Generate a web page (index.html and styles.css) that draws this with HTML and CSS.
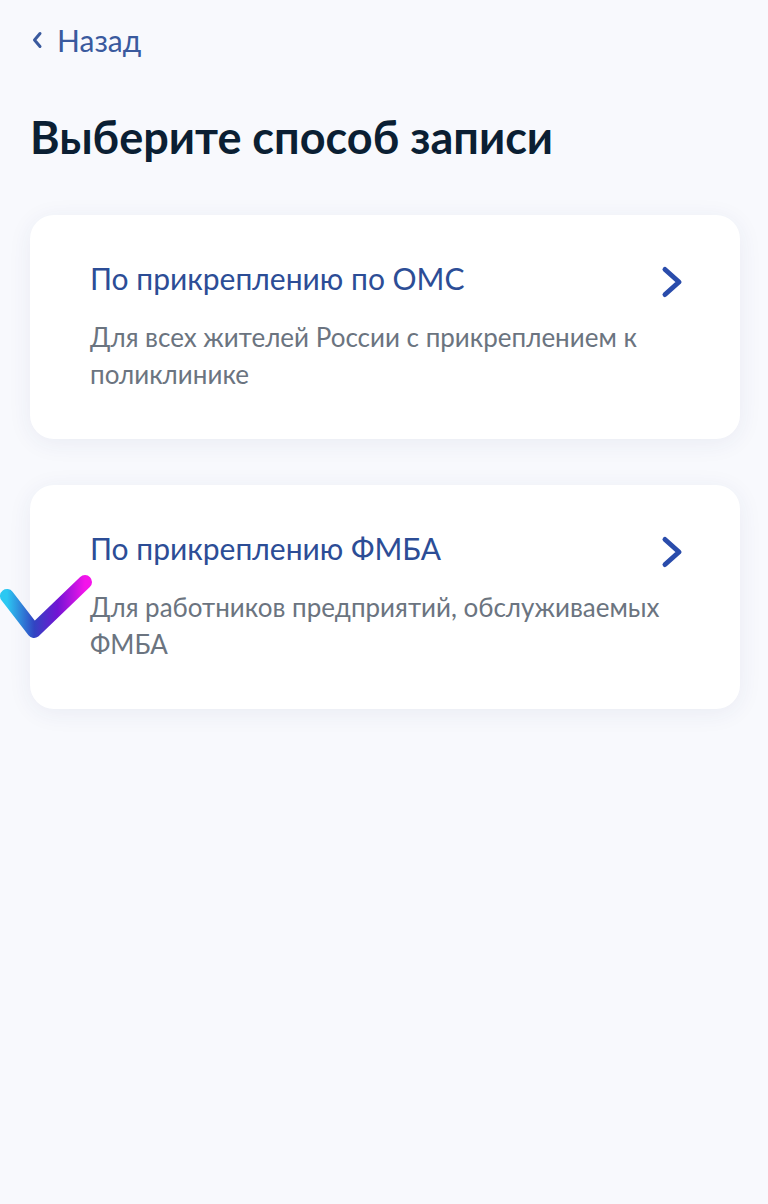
FILE: index.html
```html
<!DOCTYPE html>
<html lang="ru">
<head>
    <meta charset="UTF-8">
    <meta name="viewport" content="width=device-width, initial-scale=1.0">
    <title>Выберите способ записи</title>
    <link rel="stylesheet" href="styles.css">
</head>
<body>
    <div class="page">
        <a class="back-link" href="#">
            <svg class="back-icon" width="14" height="22" viewBox="0 0 14 22">
                <path d="M10 4.5 L4.5 11 L10 17.5" fill="none" stroke="currentColor" stroke-width="3" stroke-linecap="round" stroke-linejoin="round"/>
            </svg>
            <span>Назад</span>
        </a>

        <h1>Выберите способ записи</h1>

        <div class="options">
            <a class="option-card" href="#">
                <div class="option-head">
                    <div class="option-title">По прикреплению по ОМС</div>
                    <svg class="chevron" width="24" height="34" viewBox="0 0 24 34">
                        <path d="M5 4.5 L19 17 L5 29.5" fill="none" stroke="currentColor" stroke-width="5" stroke-linecap="round" stroke-linejoin="round"/>
                    </svg>
                </div>
                <div class="option-desc">Для всех жителей России с прикреплением к поликлинике</div>
            </a>

            <a class="option-card" href="#">
                <div class="option-head">
                    <div class="option-title">По прикреплению ФМБА</div>
                    <svg class="chevron" width="24" height="34" viewBox="0 0 24 34">
                        <path d="M5 4.5 L19 17 L5 29.5" fill="none" stroke="currentColor" stroke-width="5" stroke-linecap="round" stroke-linejoin="round"/>
                    </svg>
                </div>
                <div class="option-desc">Для работников предприятий, обслуживаемых ФМБА</div>
                <!-- selection mark drawn over the card edge -->
                <svg class="check-mark" width="100" height="70" viewBox="0 0 100 70">
                    <defs>
                        <linearGradient id="checkGrad" x1="0" y1="0" x2="1" y2="0">
                            <stop offset="0" stop-color="#2cc8f2"/>
                            <stop offset="0.35" stop-color="#3144c2"/>
                            <stop offset="0.65" stop-color="#7214d4"/>
                            <stop offset="1" stop-color="#f414ea"/>
                        </linearGradient>
                    </defs>
                    <path d="M8 23 L35 58 L86 9" fill="none" stroke="url(#checkGrad)" stroke-width="14" stroke-linecap="round" stroke-linejoin="round"/>
                </svg>
            </a>
        </div>
    </div>
</body>
</html>
```

FILE: styles.css
```css
body {
    font-family: 'Lato', 'Noto Sans', sans-serif;
    background-color: #f8f9fd;
    margin: 0;
    padding: 0;
    min-height: 100vh;
}

.page {
    padding: 20px 28px 0 30px;
}

.back-link {
    display: inline-flex;
    align-items: center;
    gap: 13px;
    color: #3a5a9e;
    text-decoration: none;
    font-size: 30px;
    line-height: 40px;
}

.back-icon {
    color: #3a5a9e;
}

h1 {
    margin: 51px 0 52px;
    font-size: 45px;
    line-height: 52px;
    font-weight: 700;
    color: #0b1f33;
}

.options {
    display: flex;
    flex-direction: column;
    gap: 46px;
}

.option-card {
    position: relative;
    display: block;
    background: #ffffff;
    border-radius: 24px;
    padding: 45px 56px 46px 60px;
    box-shadow: 0 4px 24px rgba(40, 60, 120, 0.07);
    text-decoration: none;
}

.option-head {
    display: flex;
    align-items: flex-start;
    justify-content: space-between;
    gap: 16px;
    height: 36px;
}

.option-title {
    font-size: 30px;
    line-height: 36px;
    color: #2c4d96;
}

.option-desc {
    margin-top: 23px;
    font-size: 26px;
    line-height: 37px;
    color: #6b7480;
}

.chevron {
    flex-shrink: 0;
    margin-top: 5px;
    color: #2a4cab;
}

.check-mark {
    position: absolute;
    left: -31px;
    top: 88px;
}
```
